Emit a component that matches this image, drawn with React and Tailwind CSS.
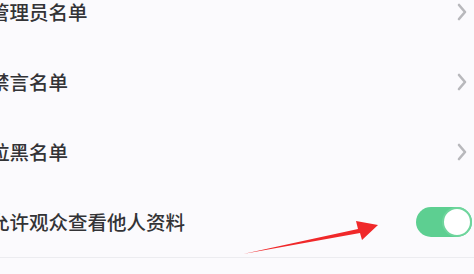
import React from 'react';

const rows = [
    { label: '管理员名单', type: 'link' },
    { label: '禁言名单', type: 'link' },
    { label: '拉黑名单', type: 'link' },
    { label: '允许观众查看他人资料', type: 'toggle' },
];

function Chevron() {
    return (
        <svg width="10" height="18" viewBox="0 0 10 18" className="shrink-0 mr-[5px]" aria-hidden="true">
            <path d="M2 2 L8 9 L2 16" fill="none" stroke="#b8b8bc" strokeWidth="2.6" strokeLinecap="round" strokeLinejoin="round" />
        </svg>
    );
}

function Toggle() {
    return (
        <div className="relative w-[56px] h-[30px] rounded-full bg-[#5dcf91] shrink-0">
            <div className="absolute right-0 top-0 w-[30px] h-[30px] rounded-full bg-white border-[2px] border-[#6fd59d]" />
        </div>
    );
}

function Arrow() {
    return (
        <svg className="absolute left-0 top-0 pointer-events-none" width="474" height="274" viewBox="0 0 474 274" aria-hidden="true">
            <polygon points="243,254 358,229 356,221 378,225 362,240 360,233" fill="#f0282a" />
        </svg>
    );
}

export default function App() {
    return (
        <div className="relative w-[474px] h-[274px] overflow-hidden bg-[#fbfafd] font-['Noto_Sans_CJK_SC','Noto_Sans',sans-serif]">
            <div className="mt-[-23px]">
                {rows.map((row) => (
                    <div key={row.label} className="h-[70px] flex items-center justify-between ml-[-10px] pr-[2px]">
                        <span className="text-[19.5px] font-medium text-[#333336] leading-none">{row.label}</span>
                        {row.type === 'link' ? <Chevron /> : <Toggle />}
                    </div>
                ))}
                <div className="h-px bg-[#ececf0]" />
            </div>
            <Arrow />
        </div>
    );
}
